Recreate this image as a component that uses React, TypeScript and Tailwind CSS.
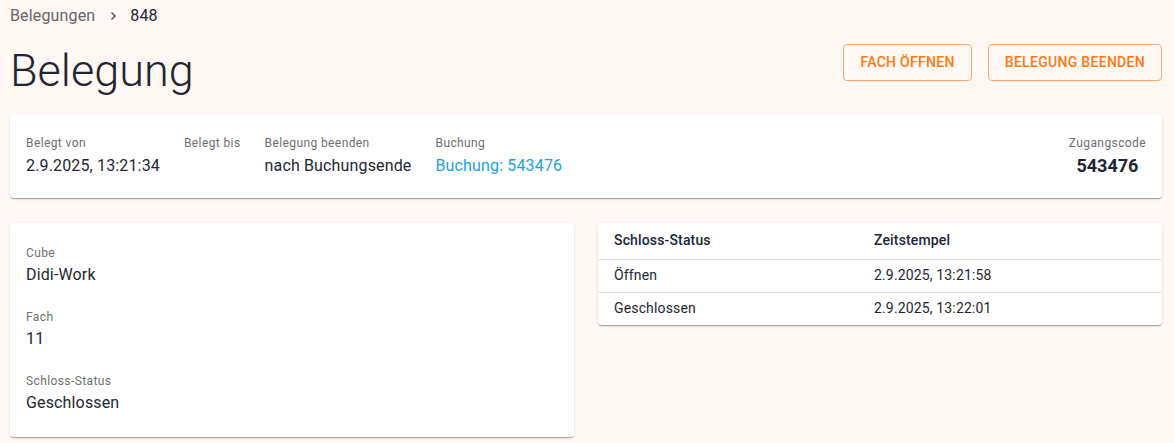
import React from "react";

const font = { fontFamily: "Roboto, 'Noto Sans', sans-serif" };

const shadow =
  "shadow-[0_2px_1px_-1px_rgba(0,0,0,0.2),0_1px_1px_0_rgba(0,0,0,0.14),0_1px_3px_0_rgba(0,0,0,0.12)]";

function Field({ label, value, link }: { label: string; value?: string; link?: boolean }) {
  return (
    <div className="flex flex-col">
      <div className="text-[12px] leading-[16px] tracking-[0.4px] text-[#6f6f6f]">{label}</div>
      <div
        className={`mt-[3px] text-[16px] leading-[24px] tracking-[0.15px] ${
          link ? "text-[#1aa3e0]" : "text-[#1f2533]"
        }`}
      >
        {value ?? "\u00a0"}
      </div>
    </div>
  );
}

function Info({ label, value }: { label: string; value: string }) {
  return (
    <div>
      <div className="text-[12px] leading-[16px] tracking-[0.4px] text-[#6f6f6f]">{label}</div>
      <div className="mt-[2px] text-[16px] leading-[24px] tracking-[0.15px] text-[#1f2533]">{value}</div>
    </div>
  );
}

export default function App() {
  return (
    <div style={font} className="min-h-[443px] bg-[#fff8f5] pl-[10px] pr-[12px] pt-[4px] pb-4 text-[#1f2533]">
      {/* Breadcrumb */}
      <div className="flex items-center h-[24px] text-[16px] tracking-[0.15px]">
        <span className="text-[#666666]">Belegungen</span>
        <svg className="ml-[15px] mr-[12px]" width="8" height="10" viewBox="0 0 8 10" fill="none">
          <path d="M1.5 1.5 L5 5 L1.5 8.5" stroke="#666666" strokeWidth="1.7" />
        </svg>
        <span className="text-[#1f2533]">848</span>
      </div>

      {/* Header */}
      <div className="mt-[16px] mb-[17px] flex items-start justify-between">
        <h1 className="text-[45px] leading-[53px] font-light text-[#1f2533]">Belegung</h1>
        <div className="flex gap-4">
          <button className="h-[37px] px-4 rounded-[4px] border border-[#ffaa70] text-[#ff7a0e] text-[14px] font-medium tracking-[0.3px] uppercase">
            Fach Öffnen
          </button>
          <button className="h-[37px] px-4 rounded-[4px] border border-[#ffaa70] text-[#ff7a0e] text-[14px] font-medium tracking-[0.3px] uppercase">
            Belegung beenden
          </button>
        </div>
      </div>

      {/* Card 1 */}
      <div className={`bg-white rounded-[4px] ${shadow} px-4 pt-[21px] pb-5 flex items-start justify-between`}>
        <div className="flex gap-6">
          <Field label="Belegt von" value="2.9.2025, 13:21:34" />
          <Field label="Belegt bis" />
          <Field label="Belegung beenden" value="nach Buchungsende" />
          <Field label="Buchung" value="Buchung: 543476" link />
        </div>
        <div className="flex flex-col items-center">
          <div className="text-[12px] leading-[16px] tracking-[0.4px] text-[#6f6f6f]">Zugangscode</div>
          <div className="mt-[3px] text-[18px] leading-[24px] font-bold text-[#1f2533]">543476</div>
        </div>
      </div>

      {/* Bottom grid */}
      <div className="mt-[25px] grid grid-cols-2 gap-6 items-start">
        <div className={`bg-white rounded-[4px] ${shadow} px-4 pt-[22px] pb-[22px] flex flex-col gap-[22px]`}>
          <Info label="Cube" value="Didi-Work" />
          <Info label="Fach" value="11" />
          <Info label="Schloss-Status" value="Geschlossen" />
        </div>

        <div className={`bg-white rounded-[4px] ${shadow} overflow-hidden`}>
          <table className="w-full text-left text-[14px] tracking-[0.15px] text-[#1f2533] border-collapse">
            <thead>
              <tr className="border-b border-[#e0e0e0]">
                <th className="h-[36px] px-4 font-medium w-[260px]">Schloss-Status</th>
                <th className="h-[36px] px-4 font-medium">Zeitstempel</th>
              </tr>
            </thead>
            <tbody>
              <tr className="border-b border-[#e0e0e0]">
                <td className="h-[33px] px-4">Öffnen</td>
                <td className="h-[33px] px-4">2.9.2025, 13:21:58</td>
              </tr>
              <tr>
                <td className="h-[33px] px-4">Geschlossen</td>
                <td className="h-[33px] px-4">2.9.2025, 13:22:01</td>
              </tr>
            </tbody>
          </table>
        </div>
      </div>
    </div>
  );
}
